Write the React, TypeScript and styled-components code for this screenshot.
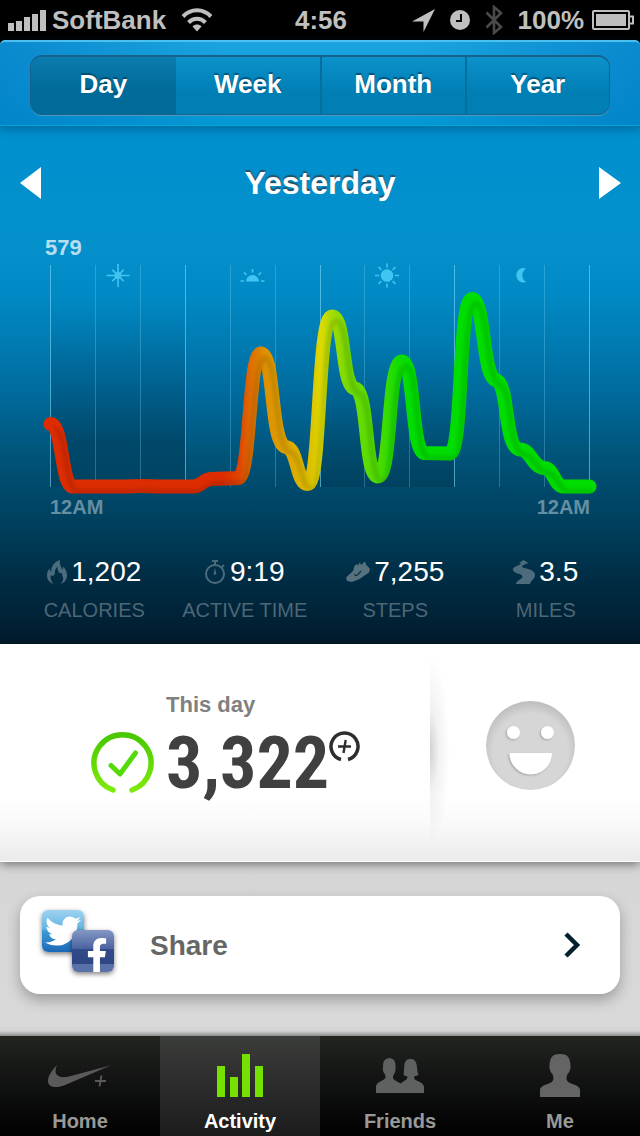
import React from 'react';
import styled, { createGlobalStyle } from 'styled-components';
import { FaFacebookF, FaTwitter } from 'react-icons/fa';

const GlobalStyle = createGlobalStyle`
  *, *::before, *::after { box-sizing: border-box; }
  body {
    margin: 0;
    background: #000;
    font-family: "Liberation Sans", Arial, sans-serif;
  }
  button { font: inherit; border: 0; padding: 0; background: none; cursor: pointer; }
  svg { display: block; }
`;

const Page = styled.div`
  display: flex;
  flex-direction: column;
  min-height: 100vh;
`;

/* ---------- status bar ---------- */

const StatusBar = styled.header`
  display: grid;
  grid-template-columns: 1fr auto 1fr;
  align-items: center;
  height: 40px;
  padding: 0 6px 0 8px;
  background: #000;
  color: #bfbfbf;
  font-size: 26px;
  font-weight: 700;
  line-height: 40px;
`;

const StatusGroup = styled.div<{ $end?: boolean; $gap: number }>`
  display: flex;
  align-items: center;
  justify-content: ${p => (p.$end ? 'flex-end' : 'flex-start')};
  gap: ${p => p.$gap}px;
`;

const Carrier = styled.span`
  margin-right: 10px;
`;

/* ---------- range selector ---------- */

const RangeBar = styled.nav`
  position: relative;
  padding: 13px 30px 11px;
  border-top: 2px solid #4cc0ee;
  border-bottom: 1px solid #0077a8;
  border-radius: 5px 5px 0 0;
  background:
    linear-gradient(90deg, rgba(0, 120, 195, 0.6), rgba(0, 150, 215, 0) 35%, rgba(0, 150, 215, 0) 65%, rgba(0, 120, 195, 0.6)),
    linear-gradient(#1ba4df, #0498d4);
  box-shadow: inset 0 -1px 0 #00a5dc, 0 3px 8px rgba(0, 60, 100, 0.4);
`;

const Segments = styled.div`
  display: grid;
  grid-template-columns: repeat(4, 1fr);
  height: 60px;
  overflow: hidden;
  border: 1px solid #16628c;
  border-top-width: 2px;
  border-radius: 12px;
  box-shadow: 0 1px 0 #4a9cc0;
`;

const Segment = styled.button<{ $active?: boolean }>`
  padding-bottom: 4px;
  color: #fff;
  font-size: 26px;
  font-weight: 700;
  line-height: 52px;
  text-shadow: 0 -2px 1px rgba(0, 50, 80, 0.6);
  background: ${p =>
    p.$active ? 'linear-gradient(#0a7cae, #006a98 60%)' : 'linear-gradient(#0c92cb, #007fb4 60%)'};
  & + & + & { border-left: 2px solid #046f9f; }
`;

/* ---------- activity ---------- */

const Activity = styled.main`
  background: linear-gradient(
    #0090cf 0%, #0590cb 24%, #008ac5 32%, #007bb2 42%, #006a9c 52%,
    #005378 64%, #003f5d 77%, #002f47 86%, #001b2c 100%
  );
`;

const DayHeader = styled.div`
  display: flex;
  align-items: center;
  justify-content: space-between;
  padding: 35px 19px 0;
`;

const DayTitle = styled.h1`
  margin: 0;
  color: #fff;
  font-size: 32px;
  line-height: 42px;
  text-shadow: 0 -2px 1px rgba(50, 60, 70, 0.75);
`;

const PeakLabel = styled.div`
  padding: 32px 0 0 45px;
  color: #b5def0;
  font-size: 22px;
  font-weight: 700;
  line-height: 24px;
`;

const AxisLabels = styled.div`
  display: flex;
  justify-content: space-between;
  padding: 0 50px;
  color: #668ea3;
  font-size: 20px;
  font-weight: 700;
  line-height: 22px;
`;

const Stats = styled.dl`
  display: grid;
  grid-template-columns: repeat(4, 1fr);
  margin: 0;
  padding: 37px 19px 22px;
`;

const Stat = styled.div`
  display: flex;
  flex-direction: column-reverse;
  gap: 9px;
`;

const StatLabel = styled.dt`
  color: #4c6776;
  font-size: 20px;
  line-height: 24px;
  text-align: center;
  white-space: nowrap;
`;

const StatValue = styled.dd`
  display: flex;
  align-items: center;
  justify-content: center;
  gap: 4px;
  margin: 0;
  color: #fff;
  font-size: 28px;
  line-height: 34px;
`;

/* ---------- totals ---------- */

const Totals = styled.section`
  position: relative;
  display: grid;
  grid-template-columns: 43fr 21fr;
  height: 218px;
  border-bottom: 1px solid #fff;
  background: linear-gradient(#fff 70%, #fafafa 82%, #ebebeb);
  box-shadow: 0 2px 10px rgba(0, 0, 0, 0.5);
`;

const Score = styled.div`
  display: grid;
  grid-template-columns: 63px auto auto;
  justify-content: start;
  align-content: start;
  column-gap: 12px;
  padding: 48px 0 0 91px;
`;

const ScoreCaption = styled.h2`
  grid-column: 2 / 4;
  margin: 0;
  color: #808080;
  font-size: 22px;
  line-height: 26px;
`;

const ScoreRing = styled.div`
  grid-column: 1;
  padding-top: 13px;
`;

const ScoreNumber = styled.div`
  display: flex;
  color: #404040;
  font-family: "Roboto Condensed", "Liberation Sans", sans-serif;
  font-size: 72px;
  font-weight: 700;
  line-height: 92px;
`;

const FuelMark = styled.span`
  padding-top: 13px;
`;

const MoodCell = styled.div`
  display: flex;
  justify-content: center;
  padding: 57px 9px 0 0;
  background:
    radial-gradient(ellipse 100% 50% at 0 50%, rgba(0, 0, 0, 0.18), rgba(0, 0, 0, 0.05) 45%, rgba(0, 0, 0, 0)) 0 40% / 20px 190px no-repeat;
`;

const MoodButton = styled.button`
  width: 90px;
  height: 90px;
`;

/* ---------- share ---------- */

const ShareArea = styled.section`
  flex: 1;
  padding: 34px 20px 42px;
  background: linear-gradient(#d6d6d6, #d9d9d9 94%, #d4d4d4 97%, #8c8e8c);
`;

const ShareLink = styled.a`
  display: flex;
  align-items: center;
  height: 98px;
  padding: 0 39px 0 22px;
  border-radius: 20px;
  background: #fff;
  box-shadow: 0 6px 14px rgba(0, 0, 0, 0.28);
  color: #666;
  font-size: 28px;
  font-weight: 700;
  line-height: 34px;
  text-decoration: none;
`;

const ShareText = styled.span`
  flex: 1;
  padding: 2px 0 0 36px;
`;

const Networks = styled.span`
  position: relative;
  width: 72px;
  height: 70px;
`;

const NetworkTile = styled.span<{ $front?: boolean }>`
  position: absolute;
  left: ${p => (p.$front ? 30 : 0)}px;
  top: ${p => (p.$front ? 20 : 0)}px;
  display: flex;
  align-items: ${p => (p.$front ? 'flex-end' : 'center')};
  justify-content: ${p => (p.$front ? 'flex-end' : 'center')};
  width: 42px;
  height: 42px;
  overflow: hidden;
  border-radius: 6px;
  color: #fff;
  background: ${p =>
    p.$front
      ? 'linear-gradient(#8497c4, #4a62a0 45%, #314a8b 46%, #2e4683 81%, #5a70a8 82%, #5a70a8)'
      : 'linear-gradient(#9ed3f0, #62b4e2 45%, #3d9ad6 50%, #1c68b8)'};
  box-shadow: 0 2px 5px rgba(0, 0, 0, 0.5);
`;

/* ---------- tab bar ---------- */

const TabBar = styled.nav`
  display: grid;
  grid-template-columns: repeat(4, 1fr);
  height: 100px;
`;

const Tab = styled.a<{ $active?: boolean }>`
  display: flex;
  flex-direction: column;
  align-items: center;
  gap: 11px;
  padding-top: 16px;
  color: ${p => (p.$active ? '#fff' : '#999')};
  background: ${p =>
    p.$active ? 'linear-gradient(#3b3d3a, #2b2b2b 50%, #1c1c1c)' : 'linear-gradient(#21241f, #101111 50%, #000)'};
  font-size: 20px;
  font-weight: 700;
  line-height: 24px;
  text-decoration: none;
`;

/* ---------- drawings ---------- */

const SignalIcon = () => (
  <svg width="39" height="21" viewBox="0 0 39 21" fill="#bfbfbf">
    <path d="M0 13h6v8H0zM8 11h6v10H8zM16 7h6v14h-6zM24 4h6v17h-6zM32 0h6v21h-6z" />
  </svg>
);

const WifiIcon = () => (
  <svg width="32" height="24" viewBox="0 0 32 24" fill="none" stroke="#bfbfbf" strokeWidth="4">
    <path d="M2 8.500C10 .3 22 .3 30 8.500" />
    <path d="M7.500 14.500C12.500 9.500 19.500 9.500 24.500 14.500" />
    <path d="M16 23.500l-4.500-5c2.500-2.600 6.500-2.600 9 0z" fill="#bfbfbf" stroke="none" />
  </svg>
);

const LocationIcon = () => (
  <svg width="23" height="23" viewBox="0 0 23 23" fill="#bfbfbf">
    <path d="M23 0L11.500 23V12.500H0z" />
  </svg>
);

const ClockIcon = () => (
  <svg width="20" height="20" viewBox="0 0 20 20">
    <circle cx="10" cy="10" r="10" fill="#bfbfbf" />
    <path d="M11 4v7H6" fill="none" stroke="#000" strokeWidth="2" />
  </svg>
);

const BluetoothIcon = () => (
  <svg width="18" height="30" viewBox="0 0 18 30" fill="none" stroke="#4a4a4a" strokeWidth="2.600">
    <path d="M1.500 7.500L16 22l-7 6V2l7 6L1.500 22.500" />
  </svg>
);

const BatteryIcon = () => (
  <svg width="42" height="20" viewBox="0 0 42 20" fill="none" stroke="#bfbfbf" strokeWidth="2">
    <rect x="1" y="1" width="36" height="18" rx="1" />
    <rect x="4" y="4" width="30" height="12" fill="#bfbfbf" stroke="none" />
    <path d="M37 6.500h4v7h-4" />
  </svg>
);

const Arrow = ({ flip }: { flip?: boolean }) => (
  <svg width="23" height="34" viewBox="0 0 23 34">
    <path d={flip ? 'M1 1l22 16L1 33z' : 'M22 1L1 17l21 16z'} fill="#fff" />
  </svg>
);

const CURVE =
  'M50.500 424C63 424 61 486.500 73 486.500H125Q142 485.500 160 486.500H193C202 486.500 202 479.500 211 479L238 478' +
  'C251 478 248 353.500 261 353.500C275 353.500 270 445 286 447C298 448 296 484 308 484' +
  'C321 484 317 316.500 332 316.500C346 316.500 341 386 355 388.500C369 391 364 476.500 378 476.500' +
  'C392 476.500 387 361.500 402 361.500C415 361.500 411 450 424 453L450 453.500' +
  'C463 453 458 299 472 299C485 299 482 377 496 380C509 383 504 448 520 449.500' +
  'C531 449.500 532 467 544 468C554 468 554 486.500 564 486.500H589.500';

const HOURS = [50, 95, 140, 185, 230, 275, 320, 364, 409, 454, 499, 544, 589];

const rays = (cx: number, cy: number, inner: number, outer: number, angles: number[]) =>
  angles
    .map(a => {
      const r = (a * Math.PI) / 180;
      const c = Math.cos(r);
      const s = Math.sin(r);
      return `M${cx + inner * c} ${cy - inner * s}L${cx + outer * c} ${cy - outer * s}`;
    })
    .join('');

const Chart = () => (
  <svg width="100%" viewBox="0 260 640 236" role="img" aria-label="Activity through the day">
    <defs>
      <linearGradient id="shadeNight" x1="0" y1="0" x2="0" y2="1">
        <stop offset="0.2" stopColor="#002438" stopOpacity="0" />
        <stop offset="0.8" stopColor="#002438" stopOpacity="0.3" />
        <stop offset="1" stopColor="#002438" stopOpacity="0.2" />
      </linearGradient>
      <linearGradient id="shadeDay" x1="0" y1="0" x2="0" y2="1">
        <stop offset="0.35" stopColor="#002438" stopOpacity="0" />
        <stop offset="1" stopColor="#002438" stopOpacity="0.25" />
      </linearGradient>
      <linearGradient id="heat" gradientUnits="userSpaceOnUse" x1="50" y1="0" x2="590" y2="0">
        <stop offset="0" stopColor="#dd2c00" />
        <stop offset="0.320" stopColor="#dd2c00" />
        <stop offset="0.350" stopColor="#dd4400" />
        <stop offset="0.370" stopColor="#de6a00" />
        <stop offset="0.395" stopColor="#df8e00" />
        <stop offset="0.440" stopColor="#dda500" />
        <stop offset="0.480" stopColor="#ddbe00" />
        <stop offset="0.503" stopColor="#dddb00" />
        <stop offset="0.520" stopColor="#a8da00" />
        <stop offset="0.555" stopColor="#72dc00" />
        <stop offset="0.610" stopColor="#4cdc00" />
        <stop offset="0.645" stopColor="#10dc00" />
        <stop offset="0.670" stopColor="#00dd00" />
        <stop offset="1" stopColor="#00dd00" />
      </linearGradient>
      <mask id="tube" maskUnits="userSpaceOnUse" x="0" y="260" width="640" height="240">
        <path d={CURVE} fill="none" stroke="#fff" strokeWidth="14" strokeLinecap="round" strokeLinejoin="round" />
      </mask>
      <filter id="soft" filterUnits="userSpaceOnUse" x="0" y="260" width="640" height="250">
        <feGaussianBlur stdDeviation="1.500" />
      </filter>
    </defs>
    <rect x="50" y="265" width="135" height="222" fill="url(#shadeNight)" />
    <rect x="320" y="265" width="134" height="222" fill="url(#shadeDay)" />
    {HOURS.map((x, i) => (
      <rect key={x} x={x} y="265" width="1" height="222" fill="#7fd8f8" opacity={i % 3 === 0 ? 0.6 : 0.3} />
    ))}
    <g stroke="#40c4f2" strokeWidth="1.600" fill="none">
      <path d={rays(118, 275.500, 0, 11.500, [0, 90, 180, 270]) + rays(118, 275.500, 0, 8, [45, 135, 225, 315])} />
      <circle cx="118" cy="275.500" r="3.500" fill="#40c4f2" stroke="none" />
      <path d="M246 281.500a6.500 6.500 0 0 1 13 0z" fill="#40c4f2" stroke="none" />
      <path d={rays(252.500, 281, 8.500, 12, [0, 45, 90, 135, 180])} />
      <circle cx="387" cy="275.500" r="6.300" fill="#40c4f2" stroke="none" />
      <path d={rays(387, 275.500, 8, 12, [0, 45, 90, 135, 180, 225, 270, 315])} />
      <path d="M526 268.500a7.200 7.200 0 1 0 0 13.500a8 8 0 0 1 0-13.500z" fill="#40c4f2" stroke="none" />
    </g>
    <path d={CURVE} fill="none" stroke="url(#heat)" strokeWidth="14" strokeLinecap="round" strokeLinejoin="round" />
    <g mask="url(#tube)">
      <path
        d={CURVE}
        transform="translate(4 5)"
        fill="none"
        stroke="#000"
        strokeOpacity="0.100"
        strokeWidth="6"
        filter="url(#soft)"
      />
    </g>
  </svg>
);

const FlameIcon = () => (
  <svg width="20" height="24" viewBox="0 0 20 24" fill="#4c6c7e">
    <path d="M6.500 23.800C2.500 22.500 0 19.500 0 15.500 0 12.500 1 10.200 2.500 8.500c.2 1.500.7 2.700 1.700 3.500C4 6.500 7.500 1.500 13 0c-1 4 1.500 6.500 2 9.500.8-.8 1.200-1.700 1.200-3C18.500 9 20 12 20 15.500c0 4-2.500 7.300-6.500 8.300 2.200-1.800 3-4 2.500-6-.6-2-1.200-3-1.200-5-1 .8-2.300.8-3.300-1.300-.8-1.700-1.200-3.300-1-5C8.500 8.500 7.300 11 7.800 14c-.8 1.800-2 2.200-4 1.200-.8 2.500.2 6 2.700 8.600z" />
  </svg>
);

const StopwatchIcon = () => (
  <svg width="21" height="24" viewBox="0 0 21 24" fill="none" stroke="#4c6c7e" strokeWidth="2">
    <circle cx="10" cy="14" r="9" />
    <path d="M7 1h6M10 1v4M17 7l2-2" />
    <path d="M10 8l1.500 6.500h-3z" fill="#4c6c7e" stroke="none" />
  </svg>
);

const ShoeIcon = () => (
  <svg width="24" height="24" viewBox="0 0 24 24">
    <path
      d="M0 17.500L7 11l1.500-5 2-2 1.500 1.500 1.500-3L15.500 5 18 2l1.500.3.5 2.200L24 9l-1 3.500L13.500 19 6 22 1 21z"
      fill="#56727f"
    />
    <path d="M9 14c-.5 2 1 2 3 .5l3-3.500" fill="none" stroke="#0b3347" strokeWidth="1.200" />
  </svg>
);

const RoadIcon = () => (
  <svg width="22" height="24" viewBox="0 0 22 24" fill="#4c6c7e">
    <path d="M6 3L10.500 0 15.500 3l-2 .7C10 5 8.500 5.800 9 6.800c.8 1.800 13 2 13 8 0 4.200-4.500 6-5 9.200H3c0-3.500 6.500-5 6.500-7.500C9.500 13.500 0 13.800 0 9.500 0 6 6 6 8 3.500z" />
  </svg>
);

const CheckRing = () => (
  <svg width="63" height="64" viewBox="0 0 63 64" fill="none" strokeLinecap="round" strokeLinejoin="round">
    <defs>
      <linearGradient id="ring" x1="0" y1="0" x2="0" y2="1">
        <stop offset="0" stopColor="#48c800" />
        <stop offset="1" stopColor="#7eea0c" />
      </linearGradient>
    </defs>
    <path d="M22 59A28.500 28.500 0 1 1 41 59" stroke="url(#ring)" strokeWidth="5.500" />
    <path d="M20 34.500l9 8.500L44.500 22" stroke="#54da08" strokeWidth="5" />
  </svg>
);

const FuelIcon = () => (
  <svg width="31" height="31" viewBox="0 0 31 31" fill="none" stroke="#2e2e2e">
    <path d="M12 28.500A13.500 13.500 0 1 1 19 28.500" strokeWidth="3.500" />
    <path d="M9 15.500h13M16.700 9l-2.200 13" strokeWidth="2.400" />
  </svg>
);

const SmileIcon = () => (
  <svg width="90" height="90" viewBox="0 0 90 90">
    <defs>
      <radialGradient id="face" cx="0.5" cy="0.56" r="0.56">
        <stop offset="0.75" stopColor="#d6d6d6" />
        <stop offset="1" stopColor="#bdbdbd" />
      </radialGradient>
      <filter id="dent" x="-20%" y="-20%" width="140%" height="140%">
        <feDropShadow dx="-1" dy="1" stdDeviation="1.200" floodColor="#000" floodOpacity="0.25" />
      </filter>
    </defs>
    <circle cx="44.500" cy="44.500" r="44.500" fill="url(#face)" />
    <g fill="#fff" filter="url(#dent)">
      <circle cx="27.500" cy="31.500" r="6.500" />
      <circle cx="61.500" cy="31.500" r="6.500" />
      <path d="M23.500 52h42.500a21.200 21.200 0 0 1-42.500 0z" />
    </g>
  </svg>
);

const Chevron = () => (
  <svg width="17" height="26" viewBox="0 0 17 26" fill="none" stroke="#04202e" strokeWidth="4.500">
    <path d="M2 2l11 11L2 24" />
  </svg>
);

const SwooshIcon = () => (
  <svg width="64" height="46" viewBox="0 0 64 46" fill="#5a5a5a">
    <path d="M9 13C4 18 0 24 0 29 0 33 3 35 8 35c3 0 5.500-.8 8-1.600L63 13.200 20 24.800C11 26.500 4.500 23 9 13z" />
    <path d="M47 29h11M53.500 23.500l-2 11" stroke="#5a5a5a" strokeWidth="1.800" />
  </svg>
);

const BarsIcon = () => (
  <svg width="46" height="46" viewBox="0 0 46 46" fill="#76e000">
    <path d="M0 14h8v31H0zM13 25h8v20h-8zM25 2h8v43h-8zM38 14h8v31h-8z" />
  </svg>
);

const FriendsIcon = () => (
  <svg width="48" height="46" viewBox="0 0 48 46" fill="#5f6160">
    <path d="M0 41v-6c0-3 2-4.500 7-7 3-1.500 3-3 2-5.500-2-2.500-2.500-5-2-8C7 8.500 9 6.500 14 6c4 1 6 3.500 5.500 9 .5 3-.5 6-2 8-1 2-.5 4 1 5l6 3.500 5-3.500c2-1 2-2.500 1.500-4-1.500 0-3-.4-3.500-1.500C29 18 26 7 34.500 7 43 7 40 18 42.500 22.500c-1 1-2.500 1.500-4 1.500-1 2 0 3.500 2 4.500 5 2 7.500 4 7.500 6.500v6z" />
  </svg>
);

const PersonIcon = () => (
  <svg width="40" height="46" viewBox="0 0 40 46" fill="#646464">
    <path d="M0 45v-7c0-3 3-4.500 10-7 4-1.500 4-5 2.500-9-2-1.500-3.500-5.500-3-9C10 5 13 2 20 2s10 3 10.500 11c.5 3.500-1 7.500-3 9-1.500 4-1.500 7.500 2.500 9 7 2.500 10 4 10 7v7z" />
  </svg>
);

/* ---------- data ---------- */

const RANGES = ['Day', 'Week', 'Month', 'Year'];

const STATS = [
  { label: 'CALORIES', value: '1,202', icon: <FlameIcon /> },
  { label: 'ACTIVE TIME', value: '9:19', icon: <StopwatchIcon /> },
  { label: 'STEPS', value: '7,255', icon: <ShoeIcon /> },
  { label: 'MILES', value: '3.5', icon: <RoadIcon /> },
];

const TABS = [
  { label: 'Home', icon: <SwooshIcon /> },
  { label: 'Activity', icon: <BarsIcon /> },
  { label: 'Friends', icon: <FriendsIcon /> },
  { label: 'Me', icon: <PersonIcon /> },
];

export default function App() {
  return (
    <>
      <GlobalStyle />
      <Page>
        <StatusBar>
          <StatusGroup $gap={5}>
            <SignalIcon />
            <Carrier>SoftBank</Carrier>
            <WifiIcon />
          </StatusGroup>
          <span>4:56</span>
          <StatusGroup $end $gap={15}>
            <LocationIcon />
            <ClockIcon />
            <BluetoothIcon />
            <StatusGroup $gap={8}>
              <span>100%</span>
              <BatteryIcon />
            </StatusGroup>
          </StatusGroup>
        </StatusBar>

        <RangeBar aria-label="Range">
          <Segments>
            {RANGES.map((range, i) => (
              <Segment key={range} type="button" $active={i === 0} aria-pressed={i === 0}>
                {range}
              </Segment>
            ))}
          </Segments>
        </RangeBar>

        <Activity>
          <DayHeader>
            <button type="button" aria-label="Previous day">
              <Arrow />
            </button>
            <DayTitle>Yesterday</DayTitle>
            <button type="button" aria-label="Next day">
              <Arrow flip />
            </button>
          </DayHeader>
          <PeakLabel>579</PeakLabel>
          <Chart />
          <AxisLabels>
            <span>12AM</span>
            <span>12AM</span>
          </AxisLabels>
          <Stats>
            {STATS.map(stat => (
              <Stat key={stat.label}>
                <StatLabel>{stat.label}</StatLabel>
                <StatValue>
                  {stat.icon}
                  {stat.value}
                </StatValue>
              </Stat>
            ))}
          </Stats>
        </Activity>

        <Totals>
          <Score>
            <ScoreCaption>This day</ScoreCaption>
            <ScoreRing>
              <CheckRing />
            </ScoreRing>
            <ScoreNumber>
              3,322
              <FuelMark>
                <FuelIcon />
              </FuelMark>
            </ScoreNumber>
          </Score>
          <MoodCell>
            <MoodButton type="button" aria-label="Mood">
              <SmileIcon />
            </MoodButton>
          </MoodCell>
        </Totals>

        <ShareArea>
          <ShareLink href="#share">
            <Networks>
              <NetworkTile>
                <FaTwitter size={36} />
              </NetworkTile>
              <NetworkTile $front>
                <FaFacebookF size={34} />
              </NetworkTile>
            </Networks>
            <ShareText>Share</ShareText>
            <Chevron />
          </ShareLink>
        </ShareArea>

        <TabBar aria-label="Main">
          {TABS.map((tab, i) => (
            <Tab key={tab.label} href={`#${tab.label.toLowerCase()}`} $active={i === 1}>
              {tab.icon}
              {tab.label}
            </Tab>
          ))}
        </TabBar>
      </Page>
    </>
  );
}
